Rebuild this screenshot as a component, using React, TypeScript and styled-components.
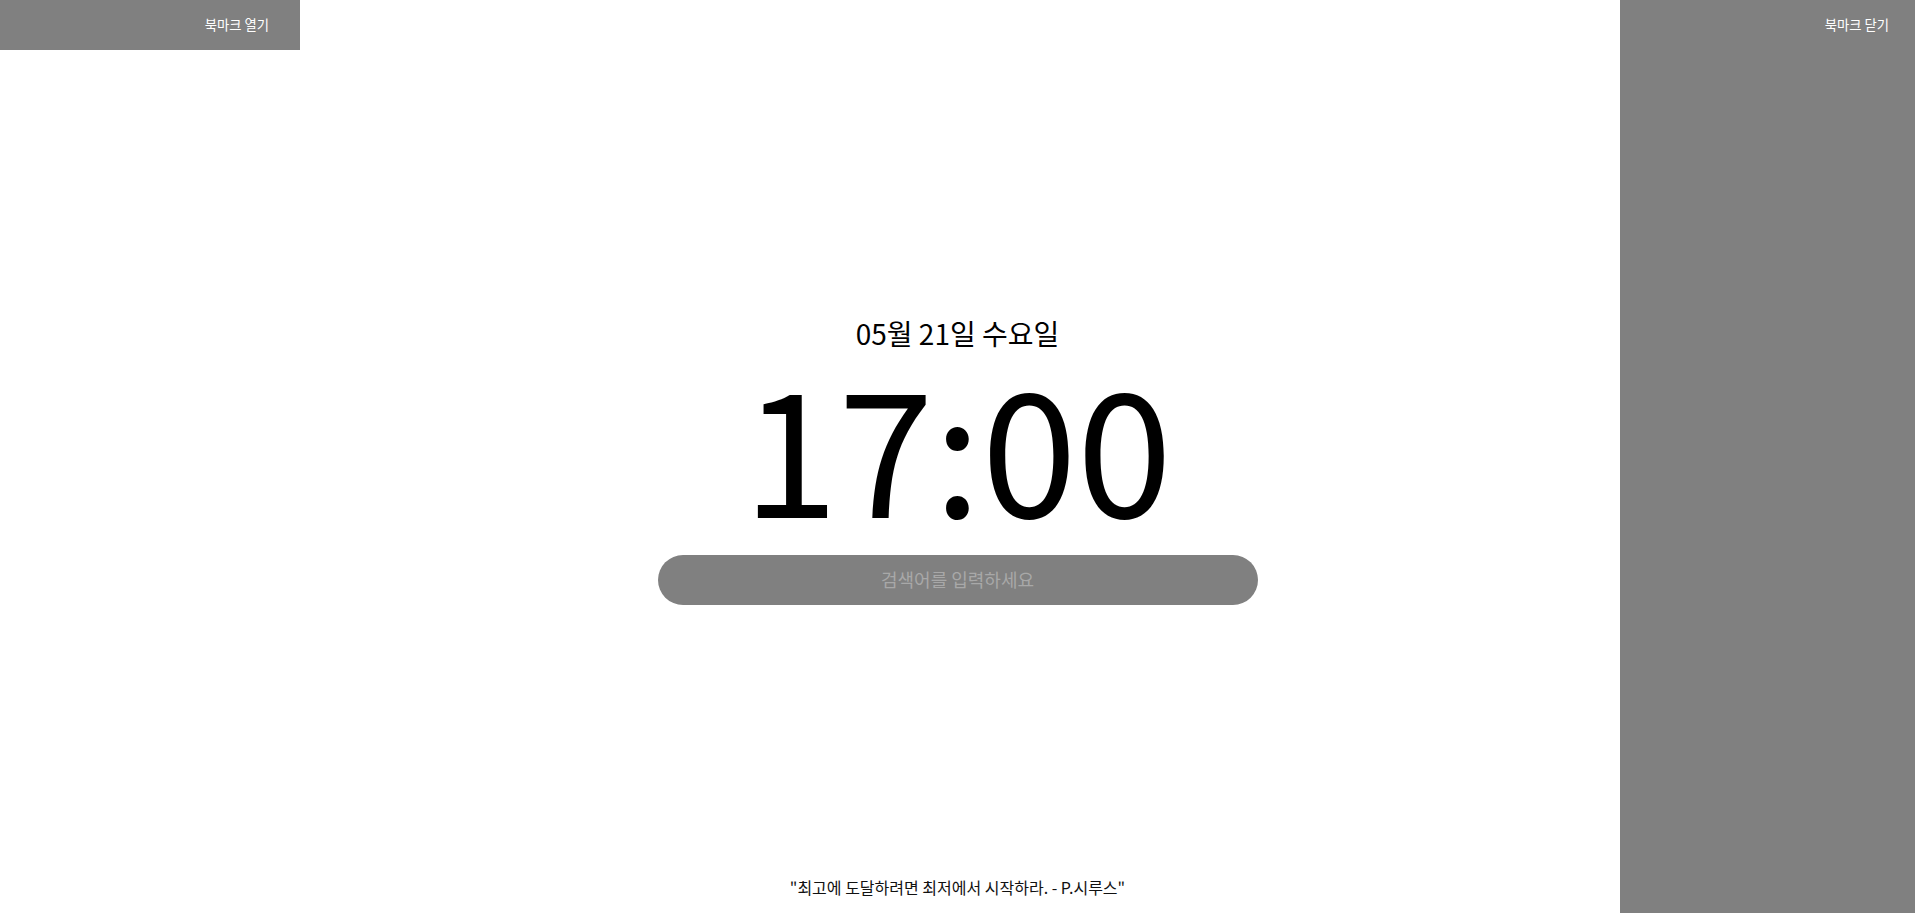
import styled, { createGlobalStyle } from "styled-components";

const quote = "\"최고에 도달하려면 최저에서 시작하라. - P.시루스\"";

export default function App() {
  return (
    <>
      <GlobalStyle />
      <Page>
        <OpenButton type="button">북마크 열기</OpenButton>

        <Center>
          <DateText>05월 21일 수요일</DateText>
          <Clock>17:00</Clock>
          <SearchInput type="text" placeholder="검색어를 입력하세요" />
        </Center>

        <Quote>{quote}</Quote>

        <Drawer>
          <CloseButton type="button">북마크 닫기</CloseButton>
        </Drawer>
      </Page>
    </>
  );
}

/* -------------------- Styled Components -------------------- */

const GlobalStyle = createGlobalStyle`
  html, body {
    margin: 0;
    padding: 0;
    background: #ffffff;
  }
  body {
    font-family: "Noto Sans CJK KR", "Noto Sans", sans-serif;
    color: #000;
  }
  * {
    box-sizing: border-box;
  }
`;

const Page = styled.div`
  height: 100vh;
  display: flex;
  flex-direction: column;
  position: relative;
  overflow: hidden;
`;

const BarButton = styled.button`
  border: none;
  background: #808080;
  color: #ffffff;
  font-family: "Noto Sans CJK KR", sans-serif;
  font-size: 13.33px;
  line-height: 1;
  cursor: pointer;
  text-align: right;
  height: 50px;
`;

const OpenButton = styled(BarButton)`
  position: absolute;
  top: 0;
  left: 0;
  width: 300px;
  padding: 0 31px 1px 0;
`;

const Center = styled.main`
  flex: 1;
  display: flex;
  flex-direction: column;
  align-items: center;
  justify-content: center;
  padding-top: 42px;
`;

const DateText = styled.div`
  font-size: 28px;
  line-height: 40px;
  height: 40px;
`;

const Clock = styled.div`
  margin-top: 4px;
  font-size: 172px;
  line-height: 172px;
  height: 172px;
`;

const SearchInput = styled.input`
  margin-top: 26px;
  width: 600px;
  height: 50px;
  border: none;
  outline: none;
  border-radius: 25px;
  background: #808080;
  color: #ffffff;
  font-family: "Noto Sans CJK KR", sans-serif;
  font-size: 18px;
  text-align: center;
  padding: 0 24px 2px;

  &::placeholder {
    color: #a8a8a8;
  }
`;

const Quote = styled.footer`
  text-align: center;
  font-size: 16px;
  line-height: 24px;
  padding-bottom: 14px;
  color: #111;
`;

const Drawer = styled.aside`
  position: absolute;
  top: 0;
  right: 0;
  bottom: 0;
  width: 295px;
  background: #808080;
  display: flex;
  flex-direction: column;
  align-items: flex-end;
`;

const CloseButton = styled(BarButton)`
  width: 100%;
  padding: 0 26px 1px 0;
`;
